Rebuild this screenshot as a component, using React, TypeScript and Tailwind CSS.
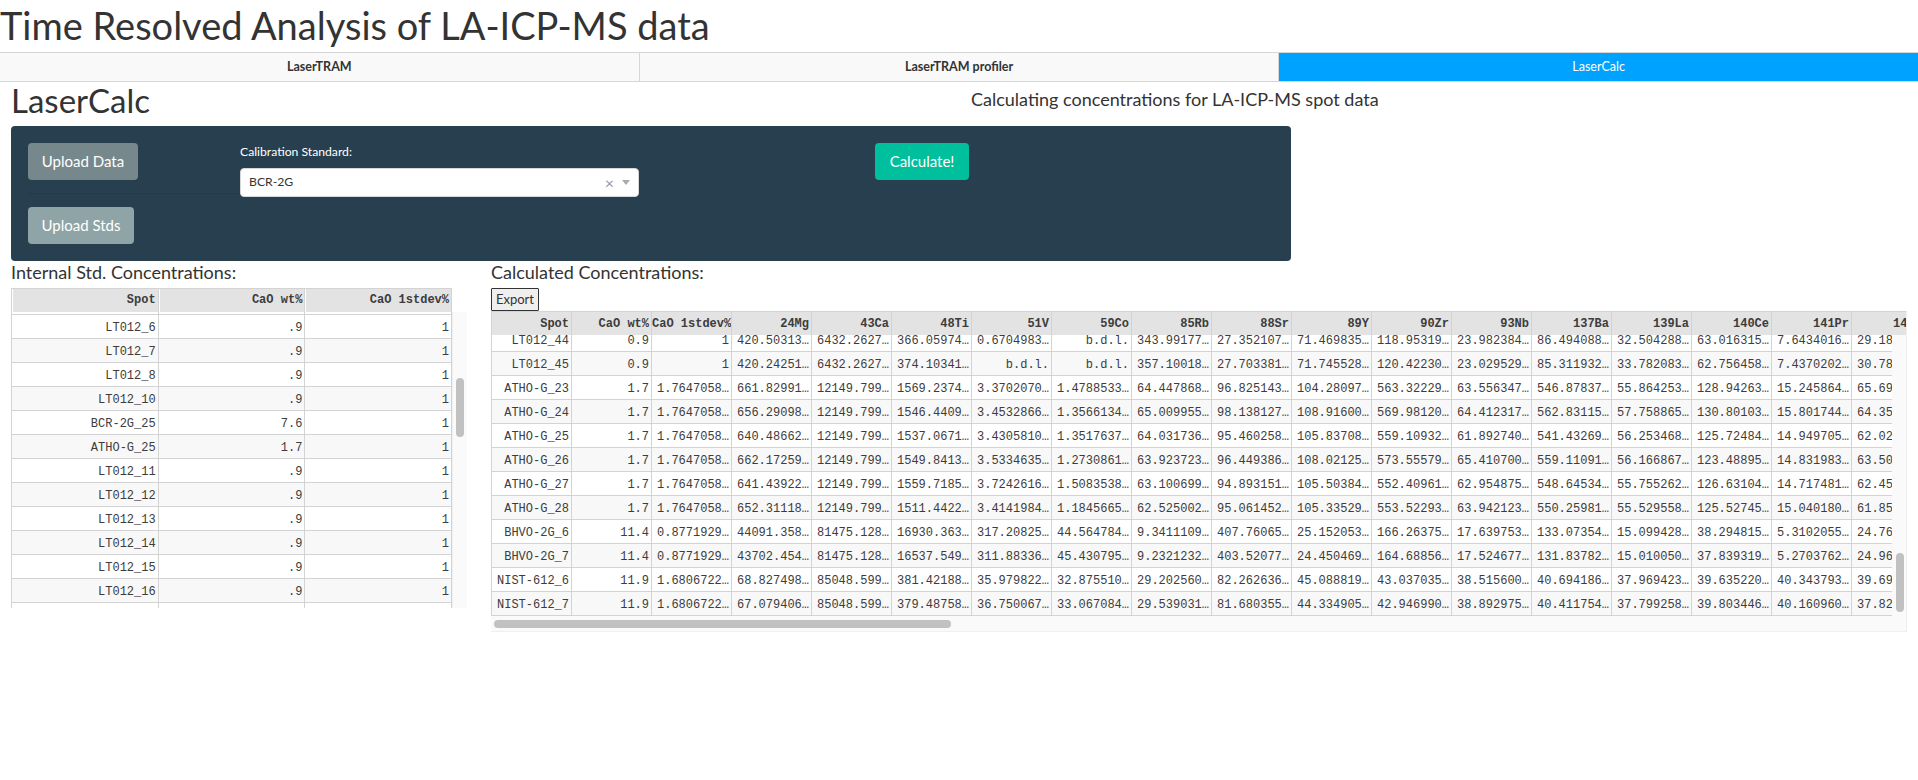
const mono = "font-['Liberation_Mono',monospace]";

const INTERNAL_ROWS = [
  ['LT012_6', '.9', '1'],
  ['LT012_7', '.9', '1'],
  ['LT012_8', '.9', '1'],
  ['LT012_10', '.9', '1'],
  ['BCR-2G_25', '7.6', '1'],
  ['ATHO-G_25', '1.7', '1'],
  ['LT012_11', '.9', '1'],
  ['LT012_12', '.9', '1'],
  ['LT012_13', '.9', '1'],
  ['LT012_14', '.9', '1'],
  ['LT012_15', '.9', '1'],
  ['LT012_16', '.9', '1'],
  ['', '', ''],
];

const CALC_COLS = ['Spot', 'CaO wt%', 'CaO 1stdev%', '24Mg', '43Ca', '48Ti', '51V', '59Co', '85Rb', '88Sr', '89Y', '90Zr', '93Nb', '137Ba', '139La', '140Ce', '141Pr', '145Nd'];

const CALC_ROWS = [
  'LT012_44 0.9 1 420.50313 6432.2627 366.05974 0.6704983 b.d.l. 343.99177 27.352107 71.469835 118.95319 23.982384 86.494088 32.504288 63.016315 7.6434016 29.184',
  'LT012_45 0.9 1 420.24251 6432.2627 374.10341 b.d.l. b.d.l. 357.10018 27.703381 71.745528 120.42230 23.029529 85.311932 33.782083 62.756458 7.4370202 30.780',
  'ATHO-G_23 1.7 1.7647058 661.82991 12149.799 1569.2374 3.3702070 1.4788533 64.447868 96.825143 104.28097 563.32229 63.556347 546.87837 55.864253 128.94263 15.245864 65.695',
  'ATHO-G_24 1.7 1.7647058 656.29098 12149.799 1546.4409 3.4532866 1.3566134 65.009955 98.138127 108.91600 569.98120 64.412317 562.83115 57.758865 130.80103 15.801744 64.359',
  'ATHO-G_25 1.7 1.7647058 640.48662 12149.799 1537.0671 3.4305810 1.3517637 64.031736 95.460258 105.83708 559.10932 61.892740 541.43269 56.253468 125.72484 14.949705 62.021',
  'ATHO-G_26 1.7 1.7647058 662.17259 12149.799 1549.8413 3.5334635 1.2730861 63.923723 96.449386 108.02125 573.55579 65.410700 559.11091 56.166867 123.48895 14.831983 63.505',
  'ATHO-G_27 1.7 1.7647058 641.43922 12149.799 1559.7185 3.7242616 1.5083538 63.100699 94.893151 105.50384 552.40961 62.954875 548.64534 55.755262 126.63104 14.717481 62.450',
  'ATHO-G_28 1.7 1.7647058 652.31118 12149.799 1511.4422 3.4141984 1.1845665 62.525002 95.061452 105.33529 553.52293 63.942123 550.25981 55.529558 125.52745 15.040180 61.854',
  'BHVO-2G_6 11.4 0.8771929 44091.358 81475.128 16930.363 317.20825 44.564784 9.3411109 407.76065 25.152053 166.26375 17.639753 133.07354 15.099428 38.294815 5.3102055 24.760',
  'BHVO-2G_7 11.4 0.8771929 43702.454 81475.128 16537.549 311.88336 45.430795 9.2321232 403.52077 24.450469 164.68856 17.524677 131.83782 15.010050 37.839319 5.2703762 24.968',
  'NIST-612_6 11.9 1.6806722 68.827498 85048.599 381.42188 35.979822 32.875510 29.202560 82.262636 45.088819 43.037035 38.515600 40.694186 37.969423 39.635220 40.343793 39.692',
  'NIST-612_7 11.9 1.6806722 67.079406 85048.599 379.48758 36.750067 33.067084 29.539031 81.680355 44.334905 42.946990 38.892975 40.411754 37.799258 39.803446 40.160960 37.820',
].map((r) => r.split(' '));

// spot names stay whole; the last column is wider than what is visible
const fmt = (v: string, col: number) => {
  if (col === 0) return v;
  if (col === CALC_COLS.length - 1) return v.padEnd(9, '0') + '…';
  return v.length >= 9 ? v + '…' : v;
};

function Tab({ label, active }: { label: string; active?: boolean }) {
  return (
    <div
      className={`flex-1 flex items-center justify-center text-[12.5px] font-bold ${
        active ? 'bg-[#00a2ff] text-white font-normal' : 'bg-[#f9f9f9] text-[#333] border-r border-[#d6d6d6]'
      }`}
    >
      {label}
    </div>
  );
}

function InternalTable() {
  return (
    <div className={`w-[456px] h-[320px] overflow-hidden flex ${mono} text-[12px] text-[#3c3c3c]`}>
      <div className="w-[441px] shrink-0">
        <div className="flex h-[27px] border-y border-l border-[#d3d3d3]">
          {['Spot', 'CaO wt%', 'CaO 1stdev%'].map((h) => (
            <div key={h} className="w-[147px] border-r border-[#d3d3d3]">
              <div className="h-[23px] ml-px bg-[#e3e3e3] pr-[2px] text-right font-bold leading-[23px]">{h}</div>
            </div>
          ))}
        </div>
        {INTERNAL_ROWS.map((row, i) => (
          <div key={i} className={`flex h-[24px] border-l border-b border-[#d3d3d3] ${i % 2 ? 'bg-[#f8f8f8]' : 'bg-white'}`}>
            {row.map((v, j) => (
              <div key={j} className="w-[147px] border-r border-[#d3d3d3] pr-[2px] text-right leading-[26px] whitespace-pre">
                {v}
              </div>
            ))}
          </div>
        ))}
      </div>
      <div className="w-[15px] mt-[24px] bg-[#fafafa] border-l border-[#f0f0f0] pt-[66px] pl-[3px]">
        <div className="w-[8px] h-[59px] rounded bg-[#c1c1c1]" />
      </div>
    </div>
  );
}

function CalcTable() {
  return (
    <div className={`w-[1416px] grow overflow-hidden border-r border-b border-[#f0f0f0] bg-[#fafafa] ${mono} text-[12px] text-[#3c3c3c]`}>
      <div className="flex w-max h-[24px] border-t border-l border-[#d3d3d3] bg-white">
        {CALC_COLS.map((h) => (
          <div key={h} className="w-[80px] shrink-0 bg-[#e3e3e3] border-r border-[#d3d3d3] pr-[2px] text-right font-bold leading-[25px] whitespace-pre overflow-hidden">
            {h}
          </div>
        ))}
      </div>
      <div className="flex h-[281px]">
        <div className="flex-1 min-w-0 overflow-hidden">
          <div className="w-max -mt-[7px]">
            {CALC_ROWS.map((row, i) => (
              <div key={row[0]} className={`flex h-[24px] border-b border-l border-[#d3d3d3] ${i % 2 ? 'bg-[#f8f8f8]' : 'bg-white'}`}>
                {row.map((v, j) => (
                  <div key={j} className="w-[80px] shrink-0 border-r border-[#d3d3d3] px-[2px] text-right leading-[26px] whitespace-pre overflow-hidden">
                    {fmt(v, j)}
                  </div>
                ))}
              </div>
            ))}
          </div>
        </div>
        <div className="w-[14px] shrink-0 pt-[218px] pl-[4px]">
          <div className="w-[8px] h-[59px] rounded bg-[#c1c1c1]" />
        </div>
      </div>
      <div className="h-[15px] pt-[4px] pl-[3px]">
        <div className="w-[457px] h-[8px] rounded bg-[#c1c1c1]" />
      </div>
    </div>
  );
}

export default function App() {
  return (
    <div className="font-['Lato',sans-serif] text-[#333] bg-white w-[1918px] h-[780px] overflow-hidden">
      <h1 className="text-[38px] h-[52px] leading-[50px]">Time Resolved Analysis of LA-ICP-MS data</h1>
      <div className="flex h-[30px] border-y border-[#d6d6d6]">
        <Tab label="LaserTRAM" />
        <Tab label="LaserTRAM profiler" />
        <Tab label="LaserCalc" active />
      </div>

      <div className="pl-[11px]">
        <div className="flex h-[44px]">
          <h2 className="w-[960px] text-[33px] leading-[36px]">LaserCalc</h2>
          <p className="text-[18px] leading-[34px]">Calculating concentrations for LA-ICP-MS spot data</p>
        </div>

        <div className="w-[1280px] h-[135px] bg-[#283f50] rounded flex px-[17px] pt-[17px] text-white">
          <div className="w-[212px]">
            <button className="block w-[110px] h-[37px] bg-[#77888c] rounded text-[15px]">Upload Data</button>
            <hr className="border-[#24394a] mt-[13px] mb-[13px]" />
            <button className="block w-[106px] h-[37px] bg-[#8fa4a7] rounded text-[15px]">Upload Stds</button>
          </div>
          <div className="w-[399px]">
            <label className="block text-[12.2px] h-[25px] leading-[18px]">Calibration Standard:</label>
            <div className="h-[29px] bg-white rounded flex items-center px-[8px] text-[12.2px] text-[#333] border border-[#d6d6d6]">
              <span className="flex-1">BCR-2G</span>
              <span className="text-[#999] text-[16px] leading-none mr-[8px]">×</span>
              <span className="w-0 h-0 border-x-[4px] border-x-transparent border-t-[5px] border-t-[#aaa]" />
            </div>
          </div>
          <div className="ml-[236px]">
            <button className="w-[94px] h-[37px] bg-[#00bf9c] rounded text-[15px]">Calculate!</button>
          </div>
        </div>

        <div className="flex mt-[1px]">
          <div className="w-[480px]">
            <p className="text-[18px] h-[26px] leading-[21px]">Internal Std. Concentrations:</p>
            <InternalTable />
          </div>
          <div className="flex flex-col h-[370px]">
            <p className="text-[18px] h-[26px] leading-[21px]">Calculated Concentrations:</p>
            <button className="w-[48px] h-[23px] border border-[#333] rounded-[1px] bg-[#efefef] text-[13px] leading-none">Export</button>
            <CalcTable />
          </div>
        </div>
      </div>
    </div>
  );
}
